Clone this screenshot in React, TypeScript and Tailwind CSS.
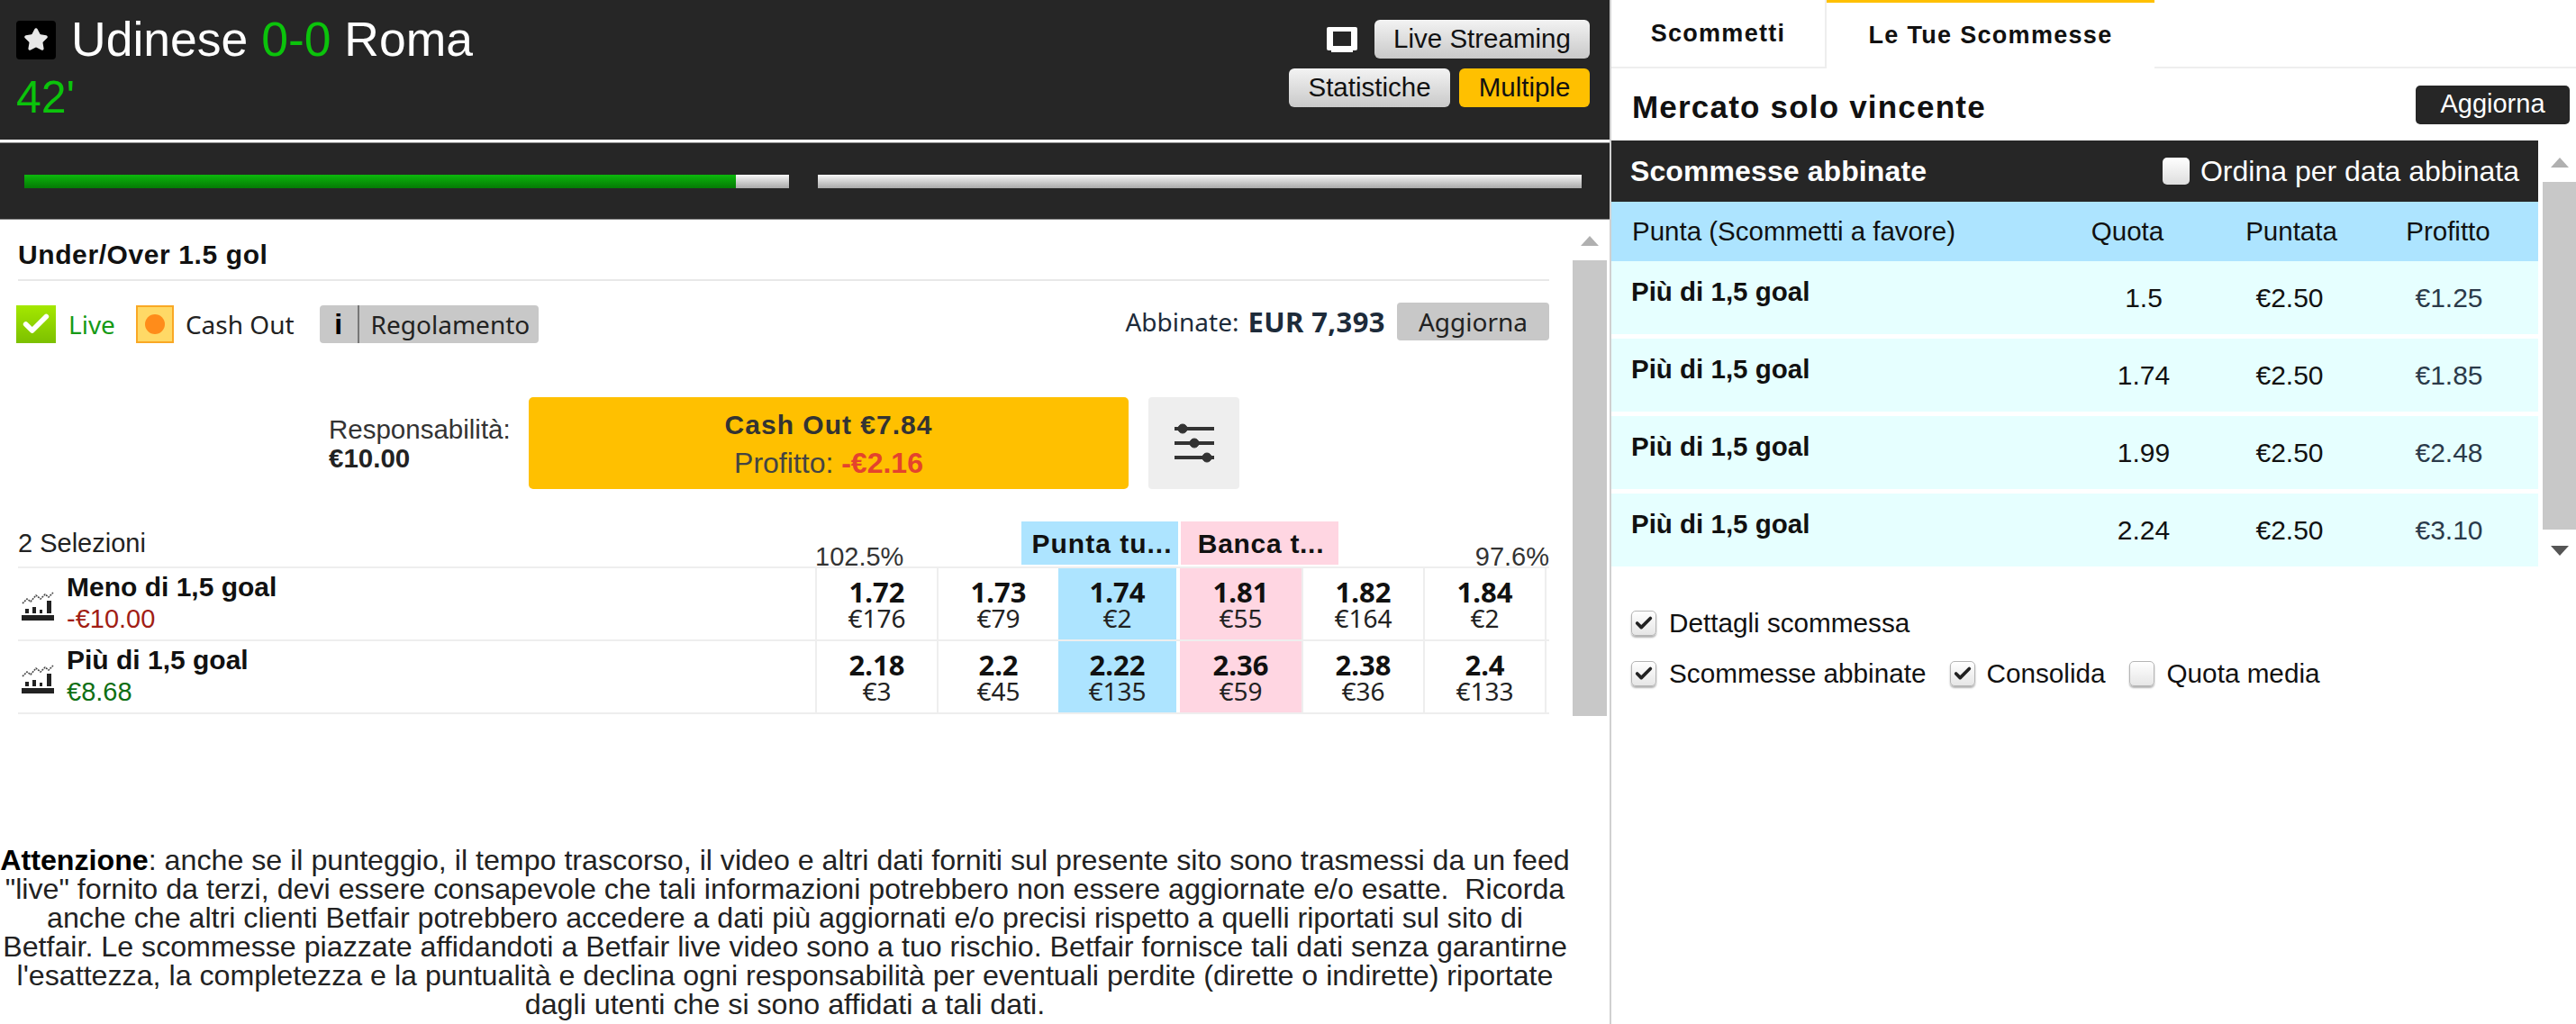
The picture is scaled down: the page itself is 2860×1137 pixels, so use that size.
import { Check, Star } from "lucide-react";

const odds = [
  {
    name: "Meno di 1,5 goal",
    pl: "-€10.00",
    plColor: "text-[#a11d14]",
    cells: [
      ["1.72", "€176"],
      ["1.73", "€79"],
      ["1.74", "€2"],
      ["1.81", "€55"],
      ["1.82", "€164"],
      ["1.84", "€2"],
    ],
  },
  {
    name: "Più di 1,5 goal",
    pl: "€8.68",
    plColor: "text-[#0f6f14]",
    cells: [
      ["2.18", "€3"],
      ["2.2", "€45"],
      ["2.22", "€135"],
      ["2.36", "€59"],
      ["2.38", "€36"],
      ["2.4", "€133"],
    ],
  },
];

const matched = [
  { odds: "1.5", profit: "€1.25" },
  { odds: "1.74", profit: "€1.85" },
  { odds: "1.99", profit: "€2.48" },
  { odds: "2.24", profit: "€3.10" },
];

function ChartIcon() {
  return (
    <svg width="36" height="36" viewBox="0 0 36 36" className="shrink-0">
      <path d="M1 17l5-5 4 3 6-7 5 4 5-5 4 3 5-5" fill="none" stroke="#444" strokeWidth="1.6" strokeDasharray="2 1" />
      <rect x="4" y="23" width="4" height="5" fill="#222" />
      <rect x="12" y="21" width="4" height="7" fill="#222" />
      <rect x="20" y="24" width="3" height="4" fill="#222" />
      <rect x="28" y="14" width="5" height="14" fill="#222" />
      <rect x="0" y="30" width="36" height="6" fill="#222" />
    </svg>
  );
}

function FakeCheckbox({ checked }: { checked?: boolean }) {
  return (
    <span className="flex h-[28px] w-[28px] shrink-0 items-center justify-center rounded-[5px] border border-[#b5b5b5] bg-gradient-to-b from-white to-[#e6e6e6] shadow-[0_2px_2px_rgba(0,0,0,0.3)]">
      {checked && <Check size={22} strokeWidth={4} className="text-[#222]" />}
    </span>
  );
}

function Triangle({ dir, color }: { dir: "up" | "down"; color: string }) {
  return (
    <svg width="20" height="11" viewBox="0 0 20 11" className="block">
      <polygon points={dir === "up" ? "10,0 20,11 0,11" : "0,0 20,0 10,11"} fill={color} />
    </svg>
  );
}

export default function App() {
  return (
    <div className="flex h-[1137px] w-[2860px] overflow-hidden bg-white font-['Liberation_Sans',Arial,sans-serif] text-black">
      {/* Colonna sinistra */}
      <div className="w-[1787px] shrink-0">
        <div className="flex h-[155px] justify-between bg-[#262626] pl-[18px] pr-[22px] pt-[22px]">
          <div>
            <div className="flex h-[44px] items-center">
              <span className="flex h-[43px] w-[44px] items-center justify-center rounded-[4px] bg-black">
                <Star size={28} fill="#e8e8e8" stroke="#e8e8e8" />
              </span>
              <span className="ml-[17px] text-[53.5px] leading-none text-white">
                Udinese <span className="text-[#0bc30b]">0-0</span> Roma
              </span>
            </div>
            <div className="mt-[20px] text-[50px] leading-[44px] text-[#0bc30b]">42'</div>
          </div>
          <div className="flex flex-col items-end gap-[11px]">
            <div className="flex items-center gap-[19px]">
              <svg width="34" height="28" viewBox="0 0 34 28">
                <path d="M2 0h30a2 2 0 0 1 2 2v22a2 2 0 0 1-2 2h-3v2H5v-2H2a2 2 0 0 1-2-2V2a2 2 0 0 1 2-2z" fill="#fff" />
                <rect x="7" y="5" width="20" height="16" fill="#262626" />
              </svg>
              <span className="flex h-[43px] w-[239px] items-center justify-center rounded-[6px] bg-gradient-to-b from-[#f3f3f3] to-[#c9c9c9] text-[29.5px] text-[#111]">
                Live Streaming
              </span>
            </div>
            <div className="flex gap-[10px]">
              <span className="flex h-[43px] w-[179px] items-center justify-center rounded-[6px] bg-gradient-to-b from-[#f3f3f3] to-[#c9c9c9] text-[29.5px] text-[#111]">
                Statistiche
              </span>
              <span className="flex h-[43px] w-[145px] items-center justify-center rounded-[6px] bg-[#ffc000] text-[29.5px] text-[#111]">
                Multiple
              </span>
            </div>
          </div>
        </div>
        <div className="h-[3px] bg-white" />
        <div className="flex h-[86px] items-center gap-[32px] border-t border-b border-[#888] bg-[#262626] pl-[27px] pr-[31px]">
          <div className="flex h-[15px] w-[849px] bg-gradient-to-b from-[#f8f8f8] to-[#a9a9a9]">
            <div className="h-full w-[790px] bg-gradient-to-b from-[#0cb80c] to-[#057a05]" />
          </div>
          <div className="h-[15px] w-[848px] bg-gradient-to-b from-[#f8f8f8] to-[#a9a9a9]" />
        </div>

        <div className="flex h-[695px]">
          <div className="w-[1746px] shrink-0 pl-[20px]">
            <div className="flex h-[68px] w-[1700px] items-center border-b-2 border-[#e8e8e8] pt-[10px] text-[30px] font-bold tracking-[0.6px] text-[#111]">
              Under/Over 1.5 gol
            </div>
            <div className="flex w-[1700px] items-start justify-between pt-[22px] font-['Noto_Sans',sans-serif] text-[28px]">
              <div className="-ml-[2px] mt-[5px] flex h-[42px] items-center">
                <span className="flex h-[42px] w-[44px] items-center justify-center bg-gradient-to-b from-[#a4e800] to-[#7cc000]">
                  <Check size={34} strokeWidth={4} className="text-white" />
                </span>
                <span className="ml-[14px] text-[#169a16]">Live</span>
                <span className="ml-[23px] flex h-[42px] w-[42px] items-center justify-center border-2 border-[#f9a825] bg-[#ffd966]">
                  <span className="h-[22px] w-[22px] rounded-full bg-[#ff8c1a]" />
                </span>
                <span className="ml-[13px] text-[#222]">Cash Out</span>
                <span className="ml-[28px] flex h-[42px] w-[243px] items-center rounded-[4px] bg-[#c8c8c8]">
                  <span className="flex h-full w-[44px] items-center justify-center border-r-2 border-[#777] font-['Liberation_Sans',sans-serif] text-[32px] font-bold">
                    i
                  </span>
                  <span className="ml-[13px] text-[#222]">Regolamento</span>
                </span>
              </div>
              <div className="flex items-center">
                <span className="text-[#1d2b3a]">Abbinate:</span>
                <span className="ml-[10px] text-[31px] font-bold tracking-[0.4px] text-[#1d2b3a]">EUR 7,393</span>
                <span className="ml-[13px] flex h-[42px] w-[169px] items-center justify-center rounded-[4px] bg-[#c8c8c8] text-[#222]">
                  Aggiorna
                </span>
              </div>
            </div>

            <div className="mt-[60px] flex pl-[345px]">
              <div className="w-[222px] pt-[20px] text-[29.5px] leading-[32px] text-[#333]">
                <div>Responsabilità:</div>
                <div className="font-bold text-[#222]">€10.00</div>
              </div>
              <div className="flex h-[102px] w-[666px] flex-col items-center justify-center rounded-[5px] bg-[#ffc000]">
                <div className="text-[30px] font-bold leading-[44px] tracking-[1px] text-[#333]">Cash Out €7.84</div>
                <div className="text-[32px] leading-[40px] text-[#444]">
                  Profitto: <span className="font-bold text-[#e4432d]">-€2.16</span>
                </div>
              </div>
              <div className="ml-[22px] flex h-[102px] w-[101px] items-center justify-center rounded-[4px] bg-[#eeeeee]">
                <svg width="48" height="48" viewBox="0 0 48 48" stroke="#333" strokeWidth="4" fill="#333">
                  <line x1="2" y1="8" x2="46" y2="8" />
                  <circle cx="11" cy="8" r="5" strokeWidth="1" />
                  <line x1="2" y1="24" x2="46" y2="24" />
                  <circle cx="24" cy="24" r="5" strokeWidth="1" />
                  <line x1="2" y1="40" x2="46" y2="40" />
                  <circle cx="38" cy="40" r="5" strokeWidth="1" />
                </svg>
              </div>
            </div>

            <div className="mt-[36px] flex h-[50px] w-[1700px] text-[29px]">
              <div className="w-[885px] pt-[3px] text-[#222]">2 Selezioni</div>
              <div className="w-[229px] pt-[18px] text-[#333]">102.5%</div>
              <div className="flex h-[48px] w-[174px] items-center justify-center bg-[#ade4ff] pl-[5px] text-[30px] font-bold tracking-[1px] text-[#111]">
                Punta tu...
              </div>
              <div className="ml-[3px] flex h-[48px] w-[175px] items-center justify-center bg-[#ffd6e2] pl-[3px] text-[30px] font-bold tracking-[0.7px] text-[#111]">
                Banca t...
              </div>
              <div className="flex-1 pt-[18px] text-right text-[#333]">97.6%</div>
            </div>

            <div className="w-[1700px] border-t-2 border-[#eeeeee]">
              {odds.map((row) => (
                <div key={row.name} className="flex h-[81px] border-b-2 border-[#eeeeee]">
                  <div className="flex w-[885px] items-center pl-[4px]">
                    <ChartIcon />
                    <div className="ml-[14px] pb-[2px]">
                      <div className="text-[30px] font-bold leading-[34px] text-[#111]">{row.name}</div>
                      <div className={`text-[29px] leading-[36px] ${row.plColor}`}>{row.pl}</div>
                    </div>
                  </div>
                  {row.cells.map(([price, size], i) => (
                    <div
                      key={price}
                      className={
                        i === 2
                          ? "mr-[4px] flex w-[131px] flex-col items-center justify-center bg-[#ade4ff] font-['Noto_Sans',sans-serif]"
                          : i === 3
                            ? "flex w-[135px] flex-col items-center justify-center bg-[#ffd6e2] font-['Noto_Sans',sans-serif]"
                            : "flex w-[135px] flex-col items-center justify-center border-l-2 border-[#eeeeee] font-['Noto_Sans',sans-serif]"
                      }
                    >
                      <span className="text-[31px] font-bold leading-[30px] text-[#111]">{price}</span>
                      <span className="text-[28px] leading-[28px] text-[#222]">{size}</span>
                    </div>
                  ))}
                  <div className="w-[2px] bg-[#eeeeee]" />
                </div>
              ))}
            </div>
          </div>
          <div className="flex w-[38px] shrink-0 flex-col items-center pt-[18px]">
            <Triangle dir="up" color="#b0b0b0" />
            <div className="mt-[16px] h-[506px] w-full bg-[#c8c8c8]" />
          </div>
        </div>

        <p className="w-[1743px] text-center text-[32.2px] leading-[32px] text-[#222]">
          <b className="text-black">Attenzione</b>: anche se il punteggio, il tempo trascorso, il video e altri dati forniti sul presente sito sono trasmessi da un feed
          <br />
          "live" fornito da terzi, devi essere consapevole che tali informazioni potrebbero non essere aggiornate e/o esatte.&nbsp; Ricorda
          <br />
          anche che altri clienti Betfair potrebbero accedere a dati più aggiornati e/o precisi rispetto a quelli riportati sul sito di
          <br />
          Betfair. Le scommesse piazzate affidandoti a Betfair live video sono a tuo rischio. Betfair fornisce tali dati senza garantirne
          <br />
          l'esattezza, la completezza e la puntualità e declina ogni responsabilità per eventuali perdite (dirette o indirette) riportate
          <br />
          dagli utenti che si sono affidati a tali dati.
        </p>
      </div>

      {/* Colonna destra */}
      <div className="w-[1073px] shrink-0 border-l-2 border-[#d0d0d0]">
        <div className="flex h-[76px] text-[27px] font-bold tracking-[1.3px] text-[#111]">
          <div className="flex w-[239px] items-center justify-center border-r-2 border-b-2 border-[#eeeeee]">Scommetti</div>
          <div className="flex w-[364px] items-center justify-center border-t-[3px] border-[#ffc000]">Le Tue Scommesse</div>
          <div className="flex-1 border-b-2 border-[#eeeeee]" />
        </div>
        <div className="flex h-[80px] items-center justify-between pl-[23px] pr-[7px]">
          <span className="pt-[6px] text-[35px] font-bold tracking-[1.2px] text-[#111]">Mercato solo vincente</span>
          <span className="flex h-[43px] w-[171px] items-center justify-center rounded-[5px] bg-[#262626] text-[29px] text-white">
            Aggiorna
          </span>
        </div>

        <div className="flex">
          <div className="w-[1029px] shrink-0">
            <div className="flex h-[68px] items-center justify-between bg-[#262626] pl-[21px] pr-[21px] text-white">
              <span className="text-[32px] font-bold tracking-[0.1px]">Scommesse abbinate</span>
              <span className="flex items-center gap-[12px] text-[32px]">
                <span className="h-[30px] w-[30px] rounded-[5px] bg-gradient-to-b from-white to-[#dedede]" />
                Ordina per data abbinata
              </span>
            </div>
            <div className="flex h-[66px] items-center bg-[#ade4ff] text-[29.5px] text-[#111]">
              <span className="w-[493px] pl-[23px]">Punta (Scommetti a favore)</span>
              <span className="w-[160px] text-center">Quota</span>
              <span className="w-[204px] text-center">Puntata</span>
              <span className="w-[144px] text-center">Profitto</span>
            </div>
            <div className="flex flex-col gap-[5px]">
              {matched.map((row) => (
                <div key={row.odds} className="flex h-[81px] bg-[#e6ffff] text-[30px]">
                  <span className="w-[511px] pl-[22px] pt-[12px] text-[29.5px] font-bold text-[#111]">Più di 1,5 goal</span>
                  <span className="w-[160px] pt-[18px] text-center text-[#111]">{row.odds}</span>
                  <span className="w-[164px] pt-[18px] text-center text-[#111]">€2.50</span>
                  <span className="w-[190px] pt-[18px] text-center text-[#2b3a4a]">{row.profit}</span>
                </div>
              ))}
            </div>
          </div>
          <div className="ml-[5px] flex w-[37px] shrink-0 flex-col items-center pt-[19px]">
            <Triangle dir="up" color="#b0b0b0" />
            <div className="mt-[16px] h-[386px] w-full bg-[#c8c8c8]" />
            <div className="mt-[18px]">
              <Triangle dir="down" color="#555555" />
            </div>
          </div>
        </div>

        <div className="mt-[48px] pl-[22px] text-[29.7px] text-[#111]">
          <div className="flex h-[30px] items-center gap-[14px]">
            <FakeCheckbox checked />
            <span>Dettagli scommessa</span>
          </div>
          <div className="mt-[26px] flex h-[30px] items-center">
            <FakeCheckbox checked />
            <span className="ml-[14px]">Scommesse abbinate</span>
            <span className="ml-[27px]">
              <FakeCheckbox checked />
            </span>
            <span className="ml-[12px]">Consolida</span>
            <span className="ml-[26px]">
              <FakeCheckbox />
            </span>
            <span className="ml-[14px]">Quota media</span>
          </div>
        </div>
      </div>
    </div>
  );
}
